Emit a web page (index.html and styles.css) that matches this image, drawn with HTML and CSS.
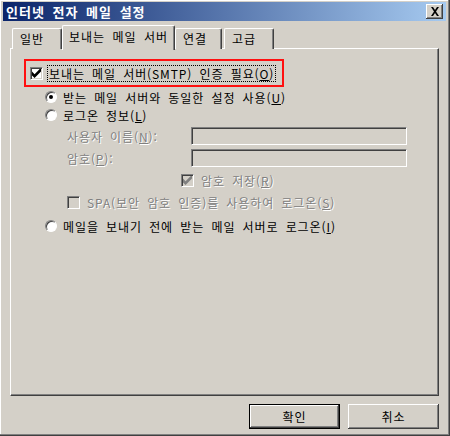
FILE: index.html
```html
<!doctype html>
<html lang="ko">
  <head>
    <meta charset="UTF-8">
    <title>인터넷 전자 메일 설정</title>
    <link rel="stylesheet" href="styles.css">
  </head>
  <body>
    <div class="window">
      <div class="titlebar">
        <span class="title">인터넷 전자 메일 설정</span>
        <button class="close" aria-label="닫기">
          <svg width="10" height="9" viewBox="0 0 10 9"><path d="M1 0h2l2 3 2-3h2L6 4.5 9 9H7L5 6 3 9H1l3-4.5z" fill="#000"/></svg>
        </button>
      </div>

      <div class="tabs">
        <div class="tab">일반</div>
        <div class="tab active">보내는 메일 서버</div>
        <div class="tab">연결</div>
        <div class="tab">고급</div>
      </div>

      <div class="panel">
        <div class="auth-box">
          <span class="check"><svg width="9" height="9" viewBox="0 0 7 7"><path d="M0 2v3l2 2 5-5V-1L2 4z" fill="#000"/></svg></span>
          <span class="focus-text">보내는 메일 서버(SMTP) 인증 필요(<u>O</u>)</span>
        </div>

        <div class="row radio-row">
          <span class="radio on"></span>
          <span>받는 메일 서버와 동일한 설정 사용(<u>U</u>)</span>
        </div>
        <div class="row radio-row">
          <span class="radio"></span>
          <span>로그온 정보(<u>L</u>)</span>
        </div>

        <div class="row field-row">
          <span class="field-label disabled">사용자 이름(<u>N</u>):</span>
          <span class="input"></span>
        </div>
        <div class="row field-row">
          <span class="field-label disabled">암호(<u>P</u>):</span>
          <span class="input"></span>
        </div>

        <div class="row save-row">
          <span class="check off"><svg width="9" height="9" viewBox="0 0 7 7"><path d="M0 2v3l2 2 5-5V-1L2 4z" fill="#808080"/></svg></span>
          <span class="disabled">암호 저장(<u>R</u>)</span>
        </div>
        <div class="row spa-row">
          <span class="check off"></span>
          <span class="disabled">SPA(보안 암호 인증)를 사용하여 로그온(<u>S</u>)</span>
        </div>

        <div class="row radio-row last">
          <span class="radio"></span>
          <span>메일을 보내기 전에 받는 메일 서버로 로그온(<u>I</u>)</span>
        </div>
      </div>

      <div class="buttons">
        <button class="btn default">확인</button>
        <button class="btn">취소</button>
      </div>
    </div>
  </body>
</html>
```

FILE: styles.css
```css
html, body {
  margin: 0;
  padding: 0;
}

body {
  width: 450px;
  height: 436px;
  overflow: hidden;
  background: #d4d0c8;
  font-family: "Noto Sans CJK KR", "Liberation Sans", sans-serif;
  font-size: 12px;
  letter-spacing: 0.9px;
  word-spacing: 3px;
  color: #000;
}

.window {
  box-sizing: border-box;
  width: 450px;
  height: 436px;
  padding: 2px 3px 0 3px;
  border-right: 1px solid #404040;
  border-bottom: 1px solid #404040;
  box-shadow: inset -1px -1px 0 #808080, inset 1px 1px 0 #fff;
  display: flex;
  flex-direction: column;
}

/* title bar */
.titlebar {
  height: 19px;
  display: flex;
  align-items: center;
  justify-content: space-between;
  padding: 0 3px 0 3px;
  background: linear-gradient(to right, #0a246a, #a6caf0);
}

.title {
  color: #fff;
  font-weight: bold;
  font-size: 13px;
  letter-spacing: 1px;
  line-height: 19px;
}

.close {
  width: 17px;
  height: 15px;
  padding: 0;
  margin: 0;
  display: flex;
  align-items: center;
  justify-content: center;
  background: #d4d0c8;
  border: none;
  box-shadow: inset -1px -1px 0 #404040, inset 1px 1px 0 #fff, inset -2px -2px 0 #808080;
}

/* tabs */
.tabs {
  display: flex;
  align-items: flex-end;
  height: 27px;
  padding-left: 9px;
  position: relative;
  z-index: 1;
}

.tab {
  box-sizing: border-box;
  height: 21px;
  margin-bottom: -1px;
  padding: 0 7px;
  line-height: 20px;
  font-size: 12px;
  letter-spacing: 1px;
  border-top: 1px solid #fff;
  border-left: 1px solid #fff;
  border-right: 1px solid #404040;
  box-shadow: inset -1px 0 0 #808080;
  border-radius: 2px 2px 0 0;
  background: #d4d0c8;
  white-space: nowrap;
}

.tab:first-child {
  width: 50px;
}

.tab.active {
  height: 25px;
  line-height: 22px;
  margin-bottom: -2px;
  padding: 0 6px;
  width: 113px;
}

.tab:nth-child(3) {
  width: 47px;
}

.tab:nth-child(4) {
  width: 50px;
  margin-left: 2px;
}

/* panel */
.panel {
  box-sizing: border-box;
  width: 429px;
  height: 348px;
  margin-left: 7px;
  border-top: 1px solid #fff;
  border-left: 1px solid #fff;
  border-right: 1px solid #404040;
  border-bottom: 1px solid #404040;
  box-shadow: inset -1px -1px 0 #808080;
  display: flex;
  flex-direction: column;
}

.auth-box {
  box-sizing: border-box;
  width: 260px;
  height: 28px;
  margin: 10px 0 0 13px;
  border: 2px solid #ff1010;
  display: flex;
  align-items: center;
  padding-left: 4px;
  gap: 5px;
}

.focus-text {
  outline: 1px dotted #000;
  padding: 0 1px;
  line-height: 15px;
  white-space: nowrap;
}

.row {
  display: flex;
  align-items: center;
  white-space: nowrap;
}

.radio-row {
  height: 18px;
  margin-left: 34px;
  gap: 6px;
}

.radio-row:nth-child(2) {
  margin-top: 1px;
}

.radio-row.last {
  height: 22px;
  margin-top: 2px;
}

.field-row {
  height: 22px;
  margin-left: 56px;
}

.field-row:nth-child(4) {
  margin-top: 1px;
}

.field-label {
  width: 124px;
}

.input {
  box-sizing: border-box;
  width: 216px;
  height: 18px;
  background: #d4d0c8;
  border-top: 1px solid #808080;
  border-left: 1px solid #808080;
  border-right: 1px solid #fff;
  border-bottom: 1px solid #fff;
  box-shadow: inset 1px 1px 0 #404040, inset -1px -1px 0 #d4d0c8;
}

.save-row {
  height: 22px;
  margin-left: 170px;
  gap: 7px;
}

.spa-row {
  height: 22px;
  margin-left: 56px;
  gap: 7px;
}

.disabled {
  color: #808080;
  text-shadow: 1px 1px 0 #fff;
}

/* checkbox + radio */
.check {
  box-sizing: border-box;
  width: 13px;
  height: 13px;
  flex: none;
  display: flex;
  align-items: center;
  justify-content: center;
  background: #fff;
  border-top: 1px solid #808080;
  border-left: 1px solid #808080;
  border-right: 1px solid #fff;
  border-bottom: 1px solid #fff;
  box-shadow: inset 1px 1px 0 #404040, inset -1px -1px 0 #d4d0c8;
}

.check.off {
  background: #d4d0c8;
}

.radio {
  box-sizing: border-box;
  width: 12px;
  height: 12px;
  flex: none;
  border-radius: 50%;
  background: #fff;
  border: 1px solid;
  border-color: #808080 #fff #fff #808080;
  box-shadow: inset 1px 1px 0 #404040;
  position: relative;
}

.radio.on::after {
  content: "";
  position: absolute;
  left: 3px;
  top: 3px;
  width: 4px;
  height: 4px;
  border-radius: 50%;
  background: #000;
}

/* buttons */
.buttons {
  display: flex;
  justify-content: flex-end;
  gap: 8px;
  width: 436px;
  margin-top: 8px;
}

.btn {
  box-sizing: border-box;
  width: 91px;
  height: 25px;
  padding: 0;
  font-family: inherit;
  font-size: 12px;
  letter-spacing: 1px;
  background: #d4d0c8;
  border: none;
  box-shadow: inset -1px -1px 0 #404040, inset 1px 1px 0 #fff, inset -2px -2px 0 #808080;
}

.btn.default {
  border: 1px solid #000;
  box-shadow: inset -1px -1px 0 #404040, inset 1px 1px 0 #fff, inset -2px -2px 0 #808080;
}
```
